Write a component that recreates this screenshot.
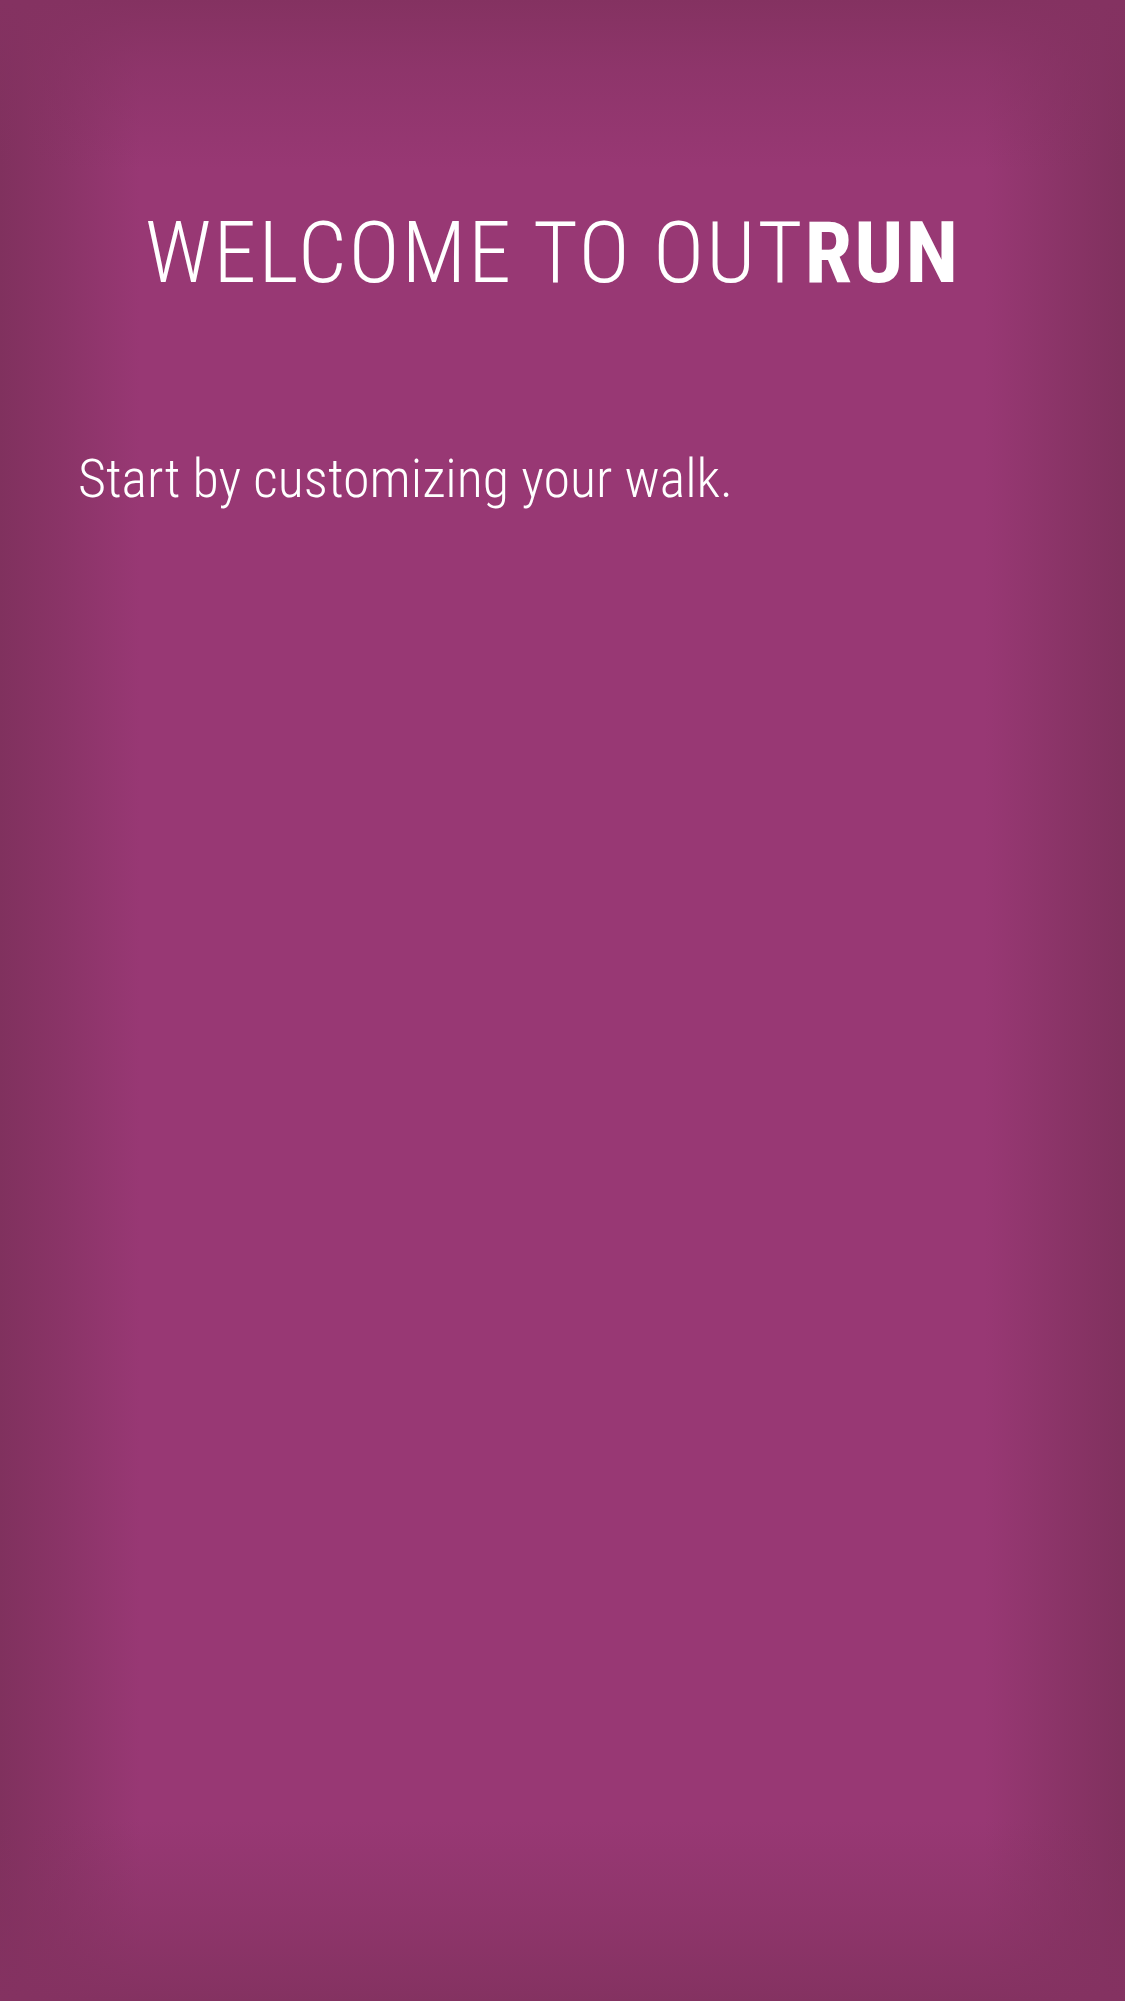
import React from "react";

export default function App() {
  return (
    <div className="w-[1125px] h-[2001px] bg-[#983874] overflow-hidden">
      <div className="h-full bg-[linear-gradient(to_right,#80315e_0px,rgba(128,49,94,0.6)_60px,rgba(128,49,94,0)_140px,rgba(128,49,94,0)_985px,rgba(128,49,94,0.6)_1065px,#80315e_1125px)]">
        <div className="h-full bg-[linear-gradient(to_bottom,#843261_0px,rgba(132,50,97,0.5)_70px,rgba(132,50,97,0)_170px,rgba(132,50,97,0)_1820px,rgba(132,50,97,0.5)_1920px,#843261_2001px)] font-['Roboto',sans-serif] text-white">
          <div className="pt-[210px] pl-[145px]">
            <h1 className="text-[86px] leading-[86px] font-light [font-stretch:condensed] tracking-[2.2px] whitespace-nowrap">
              WELCOME TO OUT<span className="font-bold">RUN</span>
            </h1>
          </div>
          <p className="mt-[156px] pl-[78px] text-[54px] leading-[54px] font-light [font-stretch:condensed] whitespace-nowrap">
            Start by customizing your walk.
          </p>
        </div>
      </div>
    </div>
  );
}
